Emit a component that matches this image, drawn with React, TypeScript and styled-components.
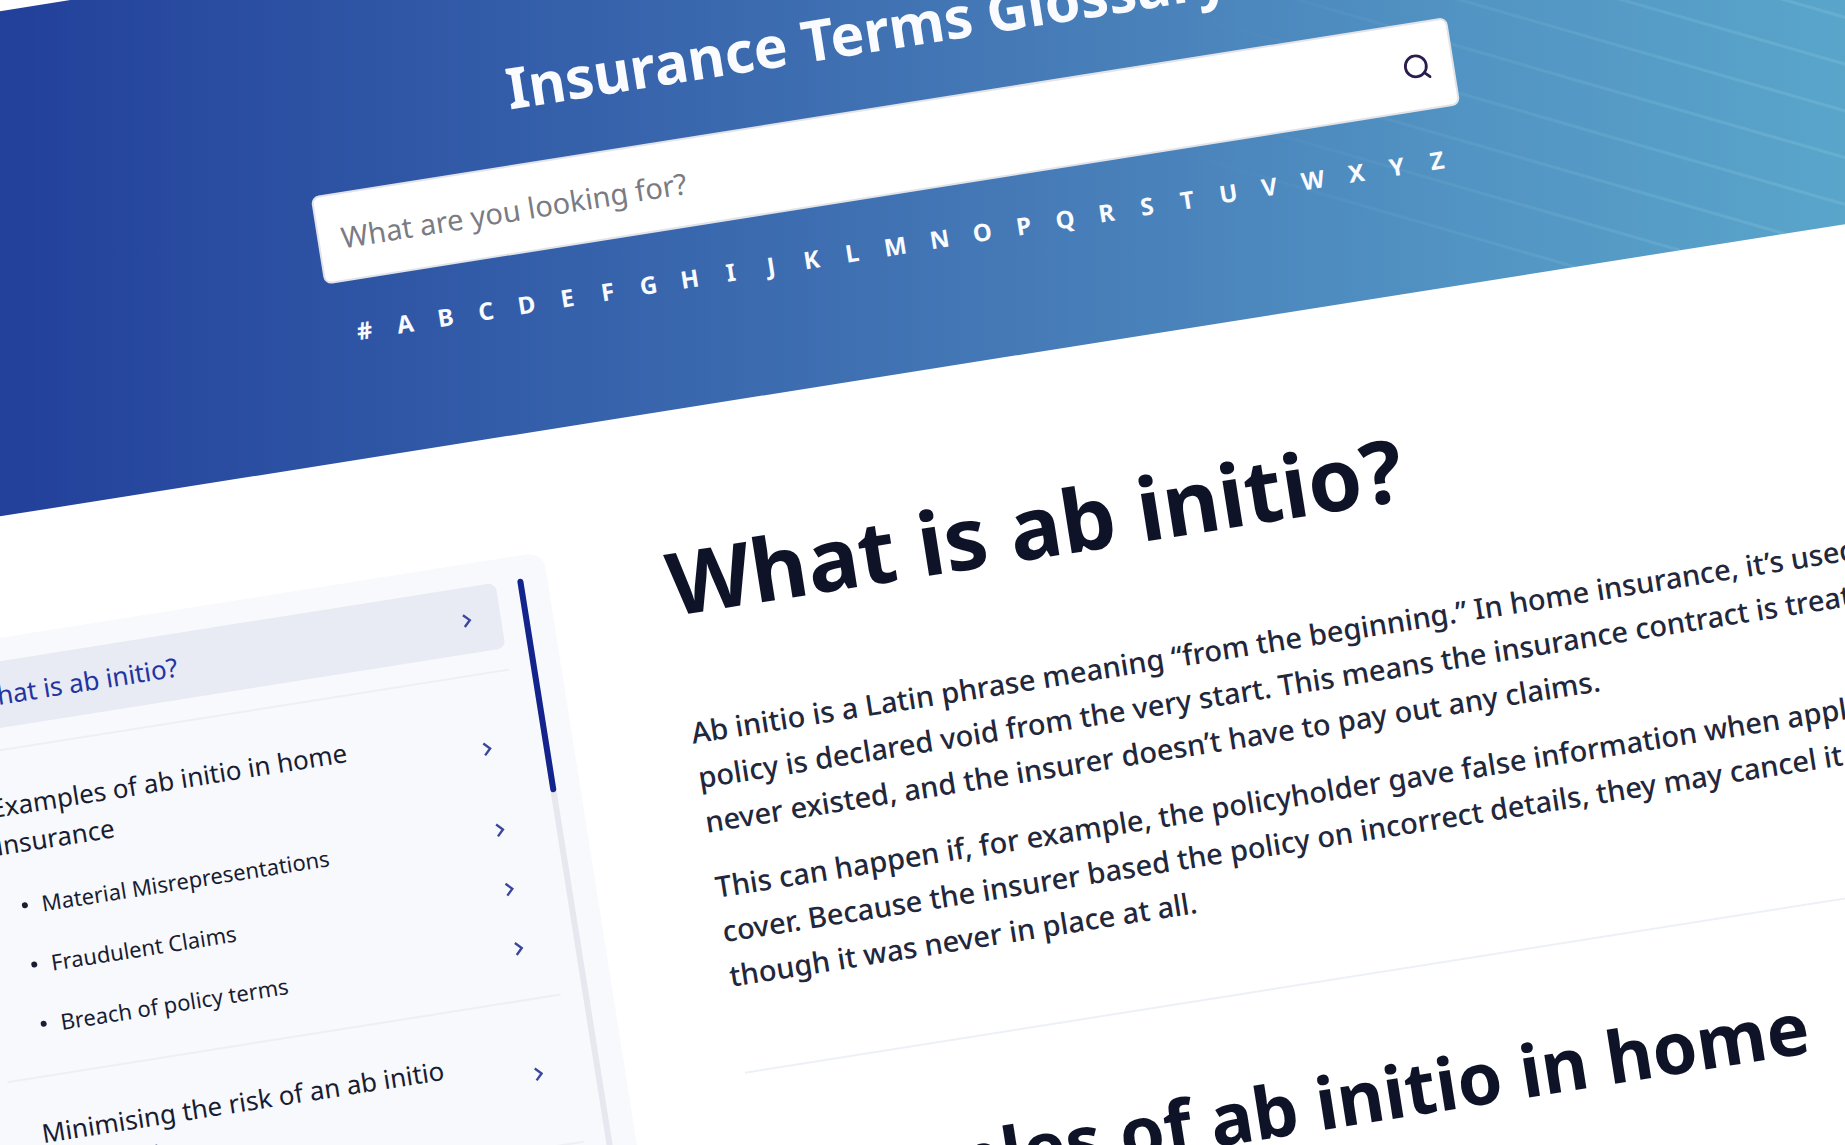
import React from "react";
import styled, { createGlobalStyle } from "styled-components";

const GlobalStyle = createGlobalStyle`
  *, *::before, *::after { box-sizing: border-box; }
  body { margin: 0; background: #ffffff; }
  h1, h2, p, ul { margin: 0; padding: 0; }
  ul { list-style: none; }
  a { color: inherit; text-decoration: none; }
`;

const Frame = styled.div`
  height: 100vh;
  overflow: hidden;
  background: #ffffff;
  color: #191d32;
  font-family: "Noto Sans", "Open Sans", sans-serif;
`;

const Tilt = styled.div`
  transform: rotate(-9deg);
  transform-origin: 0 0;
`;

const Page = styled.div`
  width: calc(100vw + 277px);
  margin-left: -210px;
  padding-top: 11px;
`;

const Hero = styled.header`
  position: relative;
  display: flex;
  flex-direction: column;
  align-items: center;
  padding: 119px 24px 111px;
  overflow: hidden;
  background: linear-gradient(99deg, #1f3594 0%, #223f9a 9%, #3662ab 37%, #477db8 59%, #5294c3 77%, #5cabcd 100%);
`;

const HeroLines = styled.svg`
  position: absolute;
  right: 0;
  bottom: 0;
  width: 1000px;
  height: 498px;
`;

const HeroTitle = styled.p`
  position: relative;
  margin-bottom: 41px;
  color: #fafbff;
  font-size: 57px;
  font-weight: 700;
  line-height: 72px;
`;

const SearchForm = styled.form`
  position: relative;
  display: flex;
  align-items: center;
  width: 100%;
  max-width: 1150px;
  height: 89px;
  margin-bottom: 35px;
  padding: 0 22px;
  border: 2px solid #e3e4ea;
  border-radius: 8px;
  background: #ffffff;
`;

const SearchInput = styled.input`
  flex: 1;
  min-width: 0;
  padding: 0;
  border: 0;
  outline: 0;
  background: transparent;
  color: #191d32;
  font-family: inherit;
  font-size: 29px;
  line-height: 45px;
  &::placeholder { color: #7b7b83; opacity: 1; }
`;

const SearchButton = styled.button`
  display: flex;
  padding: 0;
  border: 0;
  background: transparent;
  color: #2b1c4d;
  cursor: pointer;
`;

const Alphabet = styled.nav`
  position: relative;
  display: flex;
  justify-content: space-between;
  width: 100%;
  max-width: 1150px;
  padding: 0 23px 0 24px;
  color: #fafbff;
  font-size: 24px;
  font-weight: 700;
  line-height: 32px;
`;

const Letter = styled.a`
  min-width: 17px;
  text-align: center;
`;

const Body = styled.div`
  display: flex;
  gap: 118px;
  padding: 120px 24px 0;
`;

const Sidebar = styled.aside`
  display: flex;
  gap: 22px;
  flex: 0 0 636px;
  padding: 23px 24px;
  border-radius: 16px;
  background: #f8f9fc;
`;

const Contents = styled.ul`
  flex: 1;
`;

const ContentsGroup = styled.li`
  padding-bottom: 21px;
  border-bottom: 2px solid #eeeff5;
  & + & { padding-top: 22px; }
`;

const ContentsLink = styled.a<{ $active?: boolean }>`
  display: flex;
  align-items: center;
  justify-content: space-between;
  padding: 14px 29px 14px 26px;
  border-radius: 8px;
  background: ${(p) => (p.$active ? "#e8eaf4" : "transparent")};
  color: ${(p) => (p.$active ? "#2334a0" : "inherit")};
  font-size: 26px;
  line-height: 38px;
`;

const SubLink = styled(ContentsLink)`
  padding: 11px 29px 11px 42px;
  font-size: 22px;
`;

const SubLabel = styled.span`
  display: flex;
  align-items: center;
  gap: 14px;
  &::before {
    content: "";
    width: 6px;
    height: 6px;
    border-radius: 50%;
    background: currentColor;
  }
`;

const Track = styled.div`
  width: 6px;
  border-radius: 3px;
  background: #e6e7ef;
`;

const Thumb = styled.div`
  height: 216px;
  border-radius: 3px;
  background: #13248c;
`;

const Article = styled.main`
  flex: 1;
  min-width: 0;
  min-height: 900px;
`;

const Section = styled.section`
  & + & {
    margin-top: 75px;
    padding-top: 74px;
    border-top: 2px solid #edf1f6;
  }
`;

const PageTitle = styled.h1`
  margin-bottom: 79px;
  color: #0e1328;
  font-size: 87px;
  font-weight: 700;
  line-height: 100px;
`;

const SectionTitle = styled.h2`
  color: #0e1328;
  font-size: 72px;
  font-weight: 700;
  line-height: 88px;
`;

const Paragraph = styled.p`
  color: #23273b;
  font-size: 29px;
  font-weight: 500;
  line-height: 45px;
  white-space: nowrap;
  & + & { margin-top: 21px; }
`;

const Chevron = () => (
  <svg width="10" height="16" viewBox="0 0 10 16" fill="none" stroke="#3a479c" strokeWidth="2.4" aria-hidden="true">
    <path d="M2 2 8 8 2 14" />
  </svg>
);

const SearchIcon = () => (
  <svg width="26" height="26" viewBox="0 0 26 26" fill="none" stroke="currentColor" strokeWidth="2.8" strokeLinecap="round" aria-hidden="true">
    <circle cx="12" cy="12" r="10.5" />
    <path d="m19.5 19.5 5 5" />
  </svg>
);

const alphabet = "#ABCDEFGHIJKLMNOPQRSTUVWXYZ".split("");

const lineEnds = [602, 708, 814, 920, 1026, 1132, 1238, 1344];

type Entry = { label: React.ReactNode; href: string; active?: boolean; children?: string[] };

const entries: Entry[] = [
  { label: "What is ab initio?", href: "#what", active: true },
  {
    label: <>Examples of ab initio in home<br />insurance</>,
    href: "#examples",
    children: ["Material Misrepresentations", "Fraudulent Claims", "Breach of policy terms"],
  },
  { label: <>Minimising the risk of an ab initio<br />cancellation</>, href: "#risk" },
];

export default function App() {
  return (
    <Frame>
      <GlobalStyle />
      <Tilt>
        <Page>
          <Hero>
            <HeroLines viewBox="0 0 1000 498" aria-hidden="true">
              <defs>
                <linearGradient id="fade" gradientUnits="userSpaceOnUse" x1="200" y1="498" x2="750" y2="585">
                  <stop offset="0" stopColor="#a9e0ea" stopOpacity="0" />
                  <stop offset="1" stopColor="#a9e0ea" stopOpacity="0.16" />
                </linearGradient>
              </defs>
              {lineEnds.map((x) => (
                <path key={x} d={`M${x} 498 L${x - 1064} 0`} stroke="url(#fade)" strokeWidth="3" />
              ))}
            </HeroLines>
            <HeroTitle>Insurance Terms Glossary</HeroTitle>
            <SearchForm role="search" onSubmit={(e) => e.preventDefault()}>
              <SearchInput type="text" aria-label="Search terms" placeholder="What are you looking for?" />
              <SearchButton type="submit" aria-label="Search">
                <SearchIcon />
              </SearchButton>
            </SearchForm>
            <Alphabet aria-label="Terms by letter">
              {alphabet.map((letter) => (
                <Letter key={letter} href={`#letter-${letter}`}>{letter}</Letter>
              ))}
            </Alphabet>
          </Hero>
          <Body>
            <Sidebar>
              <Contents>
                {entries.map((entry) => (
                  <ContentsGroup key={entry.href}>
                    <ContentsLink href={entry.href} $active={entry.active}>
                      <span>{entry.label}</span>
                      <Chevron />
                    </ContentsLink>
                    {entry.children && (
                      <ul>
                        {entry.children.map((child) => (
                          <li key={child}>
                            <SubLink href="#examples">
                              <SubLabel>{child}</SubLabel>
                              <Chevron />
                            </SubLink>
                          </li>
                        ))}
                      </ul>
                    )}
                  </ContentsGroup>
                ))}
              </Contents>
              <Track>
                <Thumb />
              </Track>
            </Sidebar>
            <Article>
              <Section id="what">
                <PageTitle>What is ab initio?</PageTitle>
                <Paragraph>
                  Ab initio is a Latin phrase meaning “from the beginning.” In home insurance, it’s used when a<br />
                  policy is declared void from the very start. This means the insurance contract is treated as if it<br />
                  never existed, and the insurer doesn’t have to pay out any claims.
                </Paragraph>
                <Paragraph>
                  This can happen if, for example, the policyholder gave false information when applying for<br />
                  cover. Because the insurer based the policy on incorrect details, they may cancel it as<br />
                  though it was never in place at all.
                </Paragraph>
              </Section>
              <Section id="examples">
                <SectionTitle>Examples of ab initio in home<br />insurance</SectionTitle>
              </Section>
            </Article>
          </Body>
        </Page>
      </Tilt>
    </Frame>
  );
}
